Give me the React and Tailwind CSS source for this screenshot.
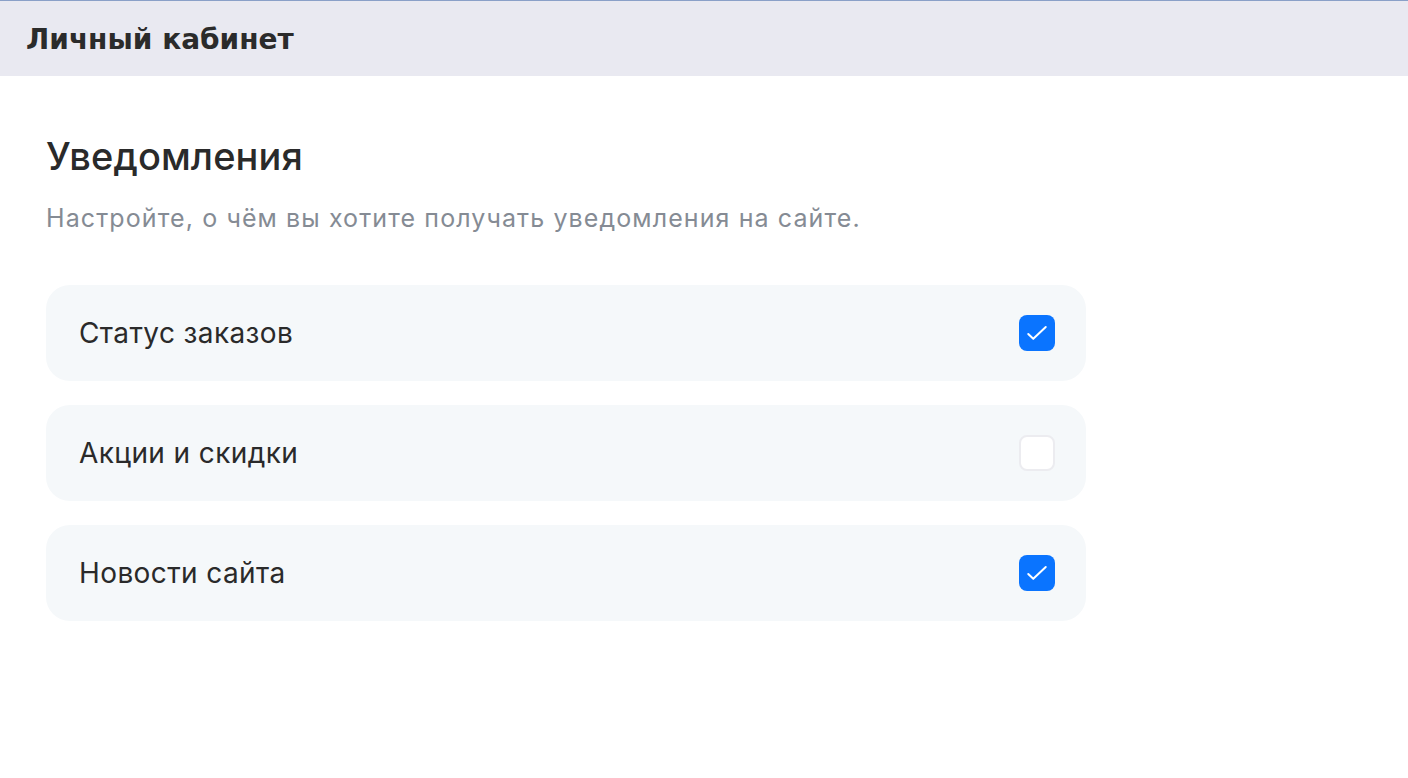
import { useState } from 'react';

const items = [
  { id: 'orders', label: 'Статус заказов', on: true },
  { id: 'promo', label: 'Акции и скидки', on: false },
  { id: 'news', label: 'Новости сайта', on: true },
];

function Check({ checked, onChange }) {
  return (
    <button
      type="button"
      onClick={onChange}
      className={`w-9 h-9 rounded-lg flex items-center justify-center shrink-0 ${
        checked ? 'bg-[#0a74ff]' : 'bg-white border-2 border-[#ececf0]'
      }`}
    >
      {checked && (
        <svg width="28" height="28" viewBox="0 0 24 24" fill="none" stroke="white" strokeWidth="1.7" strokeLinecap="round" strokeLinejoin="round">
          <path d="M4.5 12.8l4.3 4.2L19.5 6.8" />
        </svg>
      )}
    </button>
  );
}

export default function App() {
  const [state, setState] = useState(Object.fromEntries(items.map(i => [i.id, i.on])));

  return (
    <div className="min-h-screen bg-white font-['Inter',sans-serif]">
      {/* top bar */}
      <div className="h-[76px] bg-[#e9e9f1] border-t border-[#8aa0c8] flex items-center px-[26px] pt-[2px]">
        <span className="font-['DejaVu_Sans',sans-serif] font-bold text-[28px] text-[#2b2b2b]">Личный кабинет</span>
      </div>

      <div className="bg-white min-h-[702px] px-[46px] pt-[54px]">
        <h1 className="text-[38px] font-medium text-[#2a2a2a] leading-[52px] tracking-[0.1px]">Уведомления</h1>
        <p className="mt-[20px] text-[25px] text-[#858b94] leading-[32px] tracking-[1.1px]">
          Настройте, о чём вы хотите получать уведомления на сайте.
        </p>

        <div className="mt-[51px] w-[1040px] flex flex-col gap-6">
          {items.map(item => (
            <div key={item.id} className="h-24 rounded-3xl bg-[#f5f8fa] flex items-center justify-between pl-[33px] pr-[31px]">
              <span className="text-[28px] text-[#2a2a2a] tracking-[0.4px]">{item.label}</span>
              <Check
                checked={state[item.id]}
                onChange={() => setState(s => ({ ...s, [item.id]: !s[item.id] }))}
              />
            </div>
          ))}
        </div>
      </div>
    </div>
  );
}
